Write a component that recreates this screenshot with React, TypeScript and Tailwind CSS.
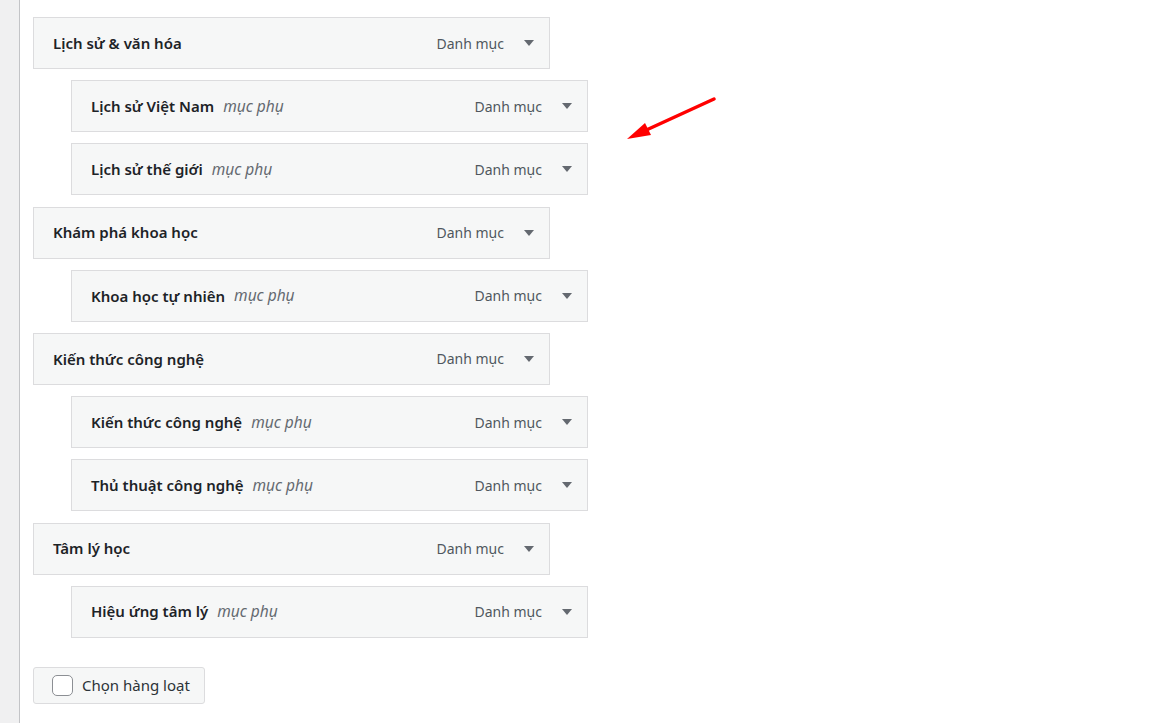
import React from 'react';

type Item = { title: string; sub?: boolean };

const items: Item[] = [
  { title: 'Lịch sử & văn hóa' },
  { title: 'Lịch sử Việt Nam', sub: true },
  { title: 'Lịch sử thế giới', sub: true },
  { title: 'Khám phá khoa học' },
  { title: 'Khoa học tự nhiên', sub: true },
  { title: 'Kiến thức công nghệ' },
  { title: 'Kiến thức công nghệ', sub: true },
  { title: 'Thủ thuật công nghệ', sub: true },
  { title: 'Tâm lý học' },
  { title: 'Hiệu ứng tâm lý', sub: true },
];

const MenuItem: React.FC<{ item: Item }> = ({ item }) => (
  <div
    className={`flex h-[52px] w-[517px] items-center border border-[#dcdcde] bg-[#f6f7f7] pl-[19px] pr-[15px] ${
      item.sub ? 'ml-[38px]' : ''
    }`}
  >
    <span className="text-[15px] font-semibold text-[#1d2327]">{item.title}</span>
    {item.sub && <span className="ml-[9px] text-[15.5px] italic text-[#646970]">mục phụ</span>}
    <span className="ml-auto text-[#50575e]">Danh mục</span>
    <svg width="10" height="6" viewBox="0 0 10 6" className="ml-[20px]">
      <path d="M0 0h10L5 6z" fill="#646970" />
    </svg>
  </div>
);

export default function App() {
  return (
    <div
      className="flex h-[723px] w-[1154px] bg-white text-[14px]"
      style={{ fontFamily: '"Noto Sans", "Open Sans", sans-serif' }}
    >
      <div className="w-[20px] border-r border-[#c3c4c7] bg-[#f0f0f1]" />
      <div className="relative flex-1 pl-[13px] pt-[17px]">
        <div className="flex flex-col gap-[11.2px]">
          {items.map((it, i) => (
            <MenuItem key={i} item={it} />
          ))}
        </div>

        <button className="mt-[29px] flex h-[37px] w-[172px] items-center rounded-[3px] border border-[#dcdcde] bg-[#f6f7f7] pl-[18px] text-[15px] text-[#2c3338]">
          <span className="mr-[9px] h-[21px] w-[21px] rounded-[5px] border border-[#8c8f94] bg-white" />
          Chọn hàng loạt
        </button>

        {/* annotation arrow */}
        <svg
          className="absolute left-[604px] top-[96px]"
          width="100"
          height="45"
          viewBox="0 0 100 45"
        >
          <line x1="90" y1="3" x2="18" y2="36" stroke="#ff0000" strokeWidth="3.5" strokeLinecap="round" />
          <path d="M3 43 L21 27 L27 39 Z" fill="#ff0000" />
        </svg>
      </div>
    </div>
  );
}
